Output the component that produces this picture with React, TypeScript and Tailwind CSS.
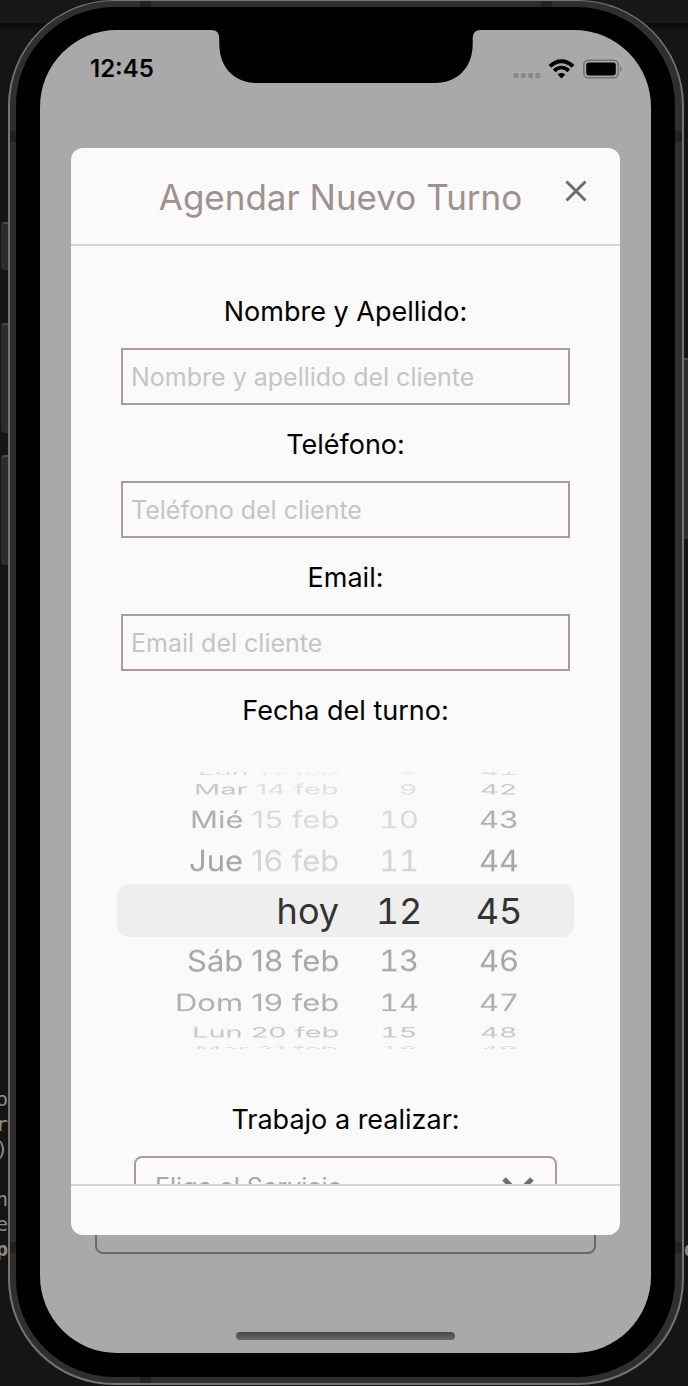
import { useState } from "react";

const DAYS = [
  ["Lun", "13 feb"],
  ["Mar", "14 feb"],
  ["Mié", "15 feb"],
  ["Jue", "16 feb"],
  ["", "hoy"],
  ["Sáb", "18 feb"],
  ["Dom", "19 feb"],
  ["Lun", "20 feb"],
  ["Mar", "21 feb"],
];
// Single digits are padded with a figure space so that the units line up.
const HOURS = ["8", "9", "10", "11", "12", "13", "14", "15", "16"].map((h) => h.padStart(2, "\u2007"));
const MINUTES = ["41", "42", "43", "44", "45", "46", "47", "48", "49"];

// Each slot of the wheel turns 20 degrees further away from the viewer.
const SLOTS = [
  "h-[9px] text-[29px] text-[#dddddd] [transform:rotateX(78deg)]",
  "h-6 text-[29px] text-[#c8c8c8] [transform:rotateX(60deg)]",
  "h-9 text-[31px] text-[#b0b0b0] [transform:rotateX(40deg)]",
  "h-[47px] text-[31px] text-[#a6a6a6] [transform:rotateX(20deg)]",
  "h-[53px] text-[36px] text-[#333333]",
  "h-[47px] text-[31px] text-[#a6a6a6] [transform:rotateX(-20deg)]",
  "h-9 text-[31px] text-[#b0b0b0] [transform:rotateX(-40deg)]",
  "h-6 text-[29px] text-[#c8c8c8] [transform:rotateX(-60deg)]",
  "h-[9px] text-[29px] text-[#dddddd] [transform:rotateX(-78deg)]",
];
const FADED = ["text-[#ececec]", "text-[#e0e0e0]", "text-[#dadada]", "text-[#d5d5d5]"];

const LABEL = "block pb-[18px] pt-[22px] text-center text-[27px] leading-9 text-black";
const FIELD =
  "block h-[57px] w-full border-2 border-[#ab9c9c] bg-transparent px-2 text-[25px] text-black outline-none placeholder:text-[#c5c5c5]";

function Wheel({ name, items, className }: { name: string; items: string[][]; className: string }) {
  const faded = name !== "Minuto";
  return (
    <div role="group" aria-label={name} className={`flex flex-col ${className}`}>
      {items.map(([lead, rest], i) => (
        <button
          key={i}
          type="button"
          className={`flex items-center justify-end gap-2 whitespace-nowrap leading-none ${SLOTS[i]}`}
        >
          {lead && <span>{lead}</span>}
          <span className={faded && i < 4 ? FADED[i] : ""}>{rest}</span>
        </button>
      ))}
    </div>
  );
}

function StatusIcons() {
  return (
    <svg width="109" height="20" viewBox="0 0 109 20" fill="none" aria-hidden="true">
      <g fill="#8a8a8a">
        <rect x="0.5" y="14" width="5" height="5" rx="1.5" />
        <rect x="7.8" y="14" width="5" height="5" rx="1.5" />
        <rect x="15.1" y="14" width="5" height="5" rx="1.5" />
        <rect x="22.4" y="14" width="5" height="5" rx="1.5" />
      </g>
      <g stroke="#000" strokeWidth="3.9">
        <path d="M37 7.4C43.8 0.6 53.2 0.6 60 7.4" />
        <path d="M41.2 11.8C45.6 7.6 51.4 7.6 55.8 11.8" />
      </g>
      <path d="M48.5 19.4L44.600 15.4C46.800 13.4 50.200 13.4 52.400 15.4Z" fill="#000" />
      <rect x="70.8" y="1.3" width="34.4" height="17.4" rx="4.5" stroke="#747474" strokeWidth="1.6" />
      <rect x="73.2" y="3.6" width="29.6" height="12.8" rx="2.4" fill="#000" />
      <path d="M107 7.2C109.2 8.2 109.2 11.8 107 12.8Z" fill="#747474" />
    </svg>
  );
}

export default function App() {
  const [service, setService] = useState("");
  return (
    <div className="flex h-screen bg-[#151515] bg-[linear-gradient(#181818_23px,#0c0c0c_23px,#0c0c0c_25px,#151515_32px)] pb-px font-['Inter','Liberation_Sans',sans-serif]">
      <div className="flex w-2 flex-none flex-col overflow-hidden pl-px pt-[222px]" aria-hidden="true">
        <div className="h-12 flex-none rounded-l-sm border-t-2 border-[#4a4a4a] bg-[#2c2c2c]" />
        <div className="mt-[53px] h-[110px] flex-none rounded-l-sm border-t-2 border-[#4a4a4a] bg-[#2c2c2c]" />
        <div className="mt-[22px] h-[110px] flex-none rounded-l-sm border-t-2 border-[#4a4a4a] bg-[#2c2c2c]" />
        <div className="mt-[522px] flex flex-col items-end font-['DejaVu_Sans_Mono',monospace] text-[20px] leading-[25px] text-[#8c8c8c]">
          <span>o</span>
          <span>r</span>
          <span>)</span>
          <span>&nbsp;</span>
          <span>n</span>
          <span>e</span>
          <span className="font-bold">p</span>
        </div>
      </div>

      <div className="relative flex min-w-0 flex-1 rounded-[106px] bg-[#747474] pb-0.5 pl-0.5 pr-0.5 pt-px">
        <div className="relative flex min-w-0 flex-1 overflow-hidden rounded-[104px] bg-[#2f2f2f] pb-1.5 pl-1.5 pr-[7px] pt-1.5">
          <i className="absolute left-0 top-[130px] h-[11px] w-2 bg-[#222]" />
          <i className="absolute right-0 top-[130px] h-[11px] w-2 bg-[#222]" />
          <i className="absolute bottom-[130px] left-0 h-[11px] w-2 bg-[#222]" />
          <i className="absolute bottom-[130px] right-0 h-[11px] w-2 bg-[#222]" />
          <i className="absolute left-[130px] top-0 h-2 w-[11px] bg-[#222]" />
          <i className="absolute right-[130px] top-0 h-2 w-[11px] bg-[#222]" />
          <i className="absolute bottom-0 left-[130px] h-2 w-[11px] bg-[#222]" />
          <div className="relative flex min-w-0 flex-1 rounded-[98px] bg-black px-6 pb-6 pt-[23px]">
            <div className="relative flex min-w-0 flex-1 flex-col rounded-[77px] bg-[#a9a9a9]">
              <header className="h-[118px] flex-none">
                <div className="flex h-[78px] items-center justify-between pl-[50px] pr-[29px]">
                  <time className="text-[24px] font-semibold text-black">12:45</time>
                  <StatusIcons />
                </div>
                <svg
                  className="absolute left-1/2 top-0 -translate-x-1/2"
                  width="270"
                  height="53"
                  viewBox="0 0 270 53"
                  aria-hidden="true"
                >
                  <path d="M0 0C6 0 8.300 3 8.300 9V14C8.300 38 24 53 46 53H224C246 53 261.700 38 261.700 14V9C261.700 3 264 0 270 0Z" />
                </svg>
              </header>

              <section
                role="dialog"
                aria-labelledby="dialog-title"
                className="mx-[31px] flex min-h-0 flex-1 flex-col rounded-xl bg-[#fafafa]"
              >
                <div className="flex h-[98px] flex-none items-center gap-2.5 border-b-2 border-[#d6d6d6] pl-[55px] pr-[33px]">
                  <h1
                    id="dialog-title"
                    className="flex-1 whitespace-nowrap pt-0.5 text-center text-[35px] text-[#a09090]"
                  >
                    Agendar Nuevo Turno
                  </h1>
                  <button type="button" aria-label="Cerrar" className="mb-2.5 flex-none">
                    <svg width="22" height="22" viewBox="0 0 22 22" fill="none" stroke="#6e6e6e" strokeWidth="3">
                      <path d="M1.500 1.500L20.500 20.500M20.500 1.500L1.500 20.500" />
                    </svg>
                  </button>
                </div>

                <form className="min-h-0 flex-1 overflow-y-auto pb-10 pt-[26px] [scrollbar-width:none]">
                  <div className="mx-[50px]">
                    <label htmlFor="name" className={LABEL}>
                      Nombre y Apellido:
                    </label>
                    <input id="name" className={FIELD} placeholder="Nombre y apellido del cliente" />
                    <label htmlFor="phone" className={LABEL}>
                      Teléfono:
                    </label>
                    <input id="phone" type="tel" className={FIELD} placeholder="Teléfono del cliente" />
                    <label htmlFor="email" className={LABEL}>
                      Email:
                    </label>
                    <input id="email" type="email" className={FIELD} placeholder="Email del cliente" />
                    <p className={LABEL}>Fecha del turno:</p>
                  </div>

                  <div className="relative mx-[46px] mb-[27px] mt-[21px]">
                    <div className="absolute inset-x-0 top-[116px] h-[53px] rounded-xl bg-[#eeeeee]" />
                    <div className="relative flex [clip-path:inset(4px_0)]">
                      <Wheel name="Día" items={DAYS} className="w-[222px] items-end" />
                      <Wheel
                        name="Hora"
                        items={HOURS.map((h) => ["", h])}
                        className="w-[120px] items-center tabular-nums"
                      />
                      <Wheel
                        name="Minuto"
                        items={MINUTES.map((m) => ["", m])}
                        className="w-20 items-center tabular-nums"
                      />
                    </div>
                  </div>

                  <div className="mx-[63px]">
                    <label htmlFor="service" className={LABEL}>
                      Trabajo a realizar:
                    </label>
                    <div className="relative">
                      <select
                        id="service"
                        value={service}
                        onChange={(e) => setService(e.target.value)}
                        className="block h-[62px] w-full appearance-none rounded-lg border-2 border-[#ab9c9c] bg-transparent pl-[19px] pr-14 pt-0.5 text-[25px] text-[#a8a8a8] outline-none"
                      >
                        <option value="">Elige el Servicio</option>
                      </select>
                      <svg
                        className="pointer-events-none absolute right-[22px] top-5"
                        width="34"
                        height="22"
                        viewBox="0 0 34 22"
                        fill="none"
                        stroke="#6e6e6e"
                        strokeWidth="5"
                        aria-hidden="true"
                      >
                        <path d="M3 3L17 17L31 3" />
                      </svg>
                    </div>
                  </div>
                </form>

                <footer className="h-[51px] flex-none border-t-2 border-[#d6d6d6]" />
              </section>

              <div className="h-[118px] flex-none px-[55px]">
                <div className="h-[19px] rounded-b-lg border-2 border-t-0 border-[#716666]" />
                <div className="mx-auto mt-[78px] h-2 w-[219px] rounded-full bg-linear-to-b from-[#474947] to-[#666666]" />
              </div>
            </div>
          </div>
        </div>
      </div>

      <div className="flex w-1 flex-none flex-col overflow-hidden pt-[358px]" aria-hidden="true">
        <div className="h-[181px] flex-none border-t-2 border-[#4a4a4a] bg-[#2c2f2e]" />
        <div className="mt-[698px] font-['DejaVu_Sans_Mono',monospace] text-[20px] font-bold leading-[25px] text-[#8c8c8c]">
          d
        </div>
      </div>
    </div>
  );
}
